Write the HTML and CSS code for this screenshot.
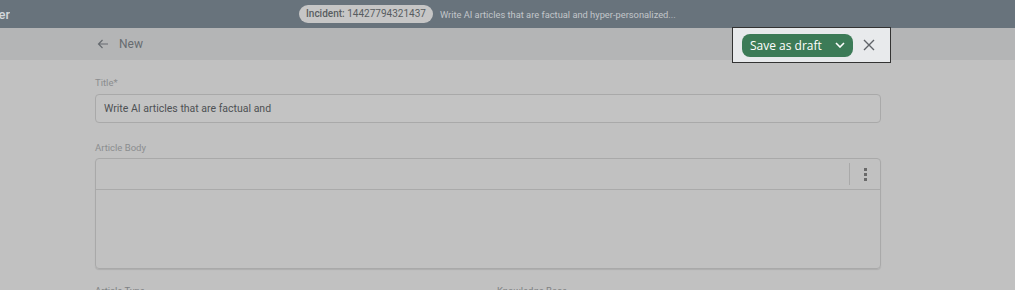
FILE: index.html
```html
<!DOCTYPE html>
<html lang="en">
<head>
      <meta charset="UTF-8">
      <title>New article</title>
      <link rel="stylesheet" href="styles.css">
</head>
<body>
      <div class="topbar">
            <div class="brand"><span>Composer</span></div>
            <div class="incident">
                  <span class="pill"><b>Incident:</b> 14427794321437</span>
                  <span class="desc">Write AI articles that are factual and hyper-personalized...</span>
            </div>
      </div>
      <div class="subbar">
            <div class="subbar-inner">
                  <div class="back">
                        <svg width="12" height="10" viewBox="0 0 12 10"><path d="M11 5H1.5M5.5 1L1.5 5l4 4" fill="none" stroke="#666b70" stroke-width="1.2"/></svg>
                        <span>New</span>
                  </div>
                  <div class="spotlight">
                        <button class="save">Save as draft
                              <svg width="10" height="6" viewBox="0 0 10 6"><path d="M1 1l4 4 4-4" fill="none" stroke="#fff" stroke-width="1.6"/></svg>
                        </button>
                        <button class="close">
                              <svg width="12" height="12" viewBox="0 0 12 12"><path d="M1 1l10 10M11 1L1 11" stroke="#5f6368" stroke-width="1.4"/></svg>
                        </button>
                  </div>
            </div>
      </div>
      <div class="content">
            <label class="label">Title*</label>
            <div class="input">Write AI articles that are factual and</div>

            <label class="label body-label">Article Body</label>
            <div class="editor">
                  <div class="toolbar">
                        <span class="sep"></span>
                        <span class="kebab"><i></i><i></i><i></i></span>
                  </div>
                  <div class="editor-area"></div>
            </div>

            <div class="row">
                  <label class="label">Article Type</label>
                  <label class="label">Knowledge Base</label>
            </div>
      </div>
</body>
</html>
```

FILE: styles.css
```css
*{
      box-sizing: border-box;
}
body{
      margin: 0;
      background: #c1c1c1;
      font-family: Roboto, "Noto Sans", sans-serif;
      height: 290px;
      overflow: hidden;
}
.topbar{
      height: 28px;
      background: #68737c;
      display: flex;
      align-items: center;
}
.brand{
      width: 10px;
      overflow: hidden;
      display: flex;
      justify-content: flex-end;
      color: #d3d7db;
      font-size: 13px;
      font-weight: 500;
}
.incident{
      margin-left: 289px;
      display: flex;
      align-items: center;
      gap: 7px;
}
.pill{
      background: #c6c6c6;
      color: #585d61;
      font-size: 10px;
      height: 18px;
      line-height: 18px;
      padding: 0 7px;
      border-radius: 9px;
}
.pill b{
      font-weight: 500;
}
.desc{
      color: #c2c6ca;
      font-size: 9.3px;
}
.subbar{
      height: 32px;
      background: #b4b5b6;
}
.subbar-inner{
      width: 786px;
      margin-left: 95px;
      height: 32px;
      display: flex;
      align-items: flex-start;
      justify-content: space-between;
}
.back{
      height: 32px;
      display: flex;
      align-items: center;
      gap: 10px;
      padding-left: 2px;
      color: #666b70;
      font-size: 12px;
}
.spotlight{
      margin-top: -1px;
      margin-right: -10px;
      height: 36px;
      width: 159px;
      border: 1px solid #333;
      background: #e8eaec;
      display: flex;
      align-items: center;
      padding-left: 9px;
      position: relative;
}
.save{
      appearance: none;
      border: none;
      background: #3c7b57;
      color: #fff;
      font-family: "Open Sans", sans-serif;
      font-size: 12px;
      height: 23px;
      width: 111px;
      border-radius: 8px;
      padding: 0 8px;
      display: flex;
      align-items: center;
      justify-content: space-between;
}
.close{
      appearance: none;
      border: none;
      background: none;
      margin-left: 10px;
      padding: 0;
      display: flex;
}
.content{
      width: 786px;
      margin-left: 95px;
}
.label{
      display: block;
      color: #8b8d8f;
      font-size: 9.5px;
      margin-top: 17px;
      height: 17px;
}
.input{
      height: 29px;
      border: 1px solid #a9a9a9;
      border-radius: 4px;
      background: #c3c3c3;
      color: #4e5154;
      font-size: 10.5px;
      line-height: 27px;
      padding-left: 8px;
}
.body-label{
      margin-top: 19px;
}
.editor{
      margin-top: -1px;
      height: 111px;
      border: 1px solid #a9a9a9;
      border-radius: 4px;
      box-shadow: 0 1px 1px rgba(0,0,0,0.1);
}
.toolbar{
      height: 31px;
      border-bottom: 1px solid #aaa;
      display: flex;
      align-items: center;
      justify-content: flex-end;
}
.sep{
      width: 1px;
      height: 22px;
      background: #a9a9a9;
}
.kebab{
      width: 30px;
      display: flex;
      flex-direction: column;
      align-items: center;
      gap: 2px;
}
.kebab i{
      width: 3px;
      height: 3px;
      background: #6a6a6a;
}
.row{
      display: flex;
}
.row .label{
      flex-shrink: 0;
      width: 402px;
      margin-top: 16px;
      color: #7f8183;
}
```
